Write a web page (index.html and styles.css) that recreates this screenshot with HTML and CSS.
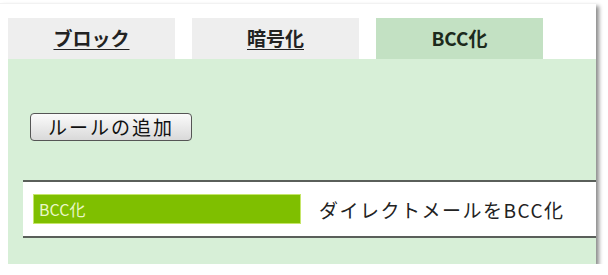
FILE: index.html
```html
<!DOCTYPE html>
<html>
<head>
  <meta charset="UTF-8">
  <title>ルール設定 - BCC化</title>
  <link rel="stylesheet" href="styles.css">
</head>

<body>
  <div class="frame">
    <ul class="tabs">
      <li class="tab"><a href="#">ブロック</a></li>
      <li class="tab"><a href="#">暗号化</a></li>
      <li class="tab active"><span>BCC化</span></li>
    </ul>

    <div class="panel">
      <button class="add-rule" type="button">ルールの追加</button>

      <div class="rule">
        <span class="rule-name">BCC化</span>
        <span class="rule-desc">ダイレクトメールをBCC化</span>
      </div>
    </div>
  </div>
</body>
</html>
```

FILE: styles.css
```css
/* page + screenshot frame */
body {
  margin: 0;
  background: #fff;
  font-family: "Noto Sans CJK JP", "Noto Sans", sans-serif;
  color: #222;
}
.frame {
  margin-top: 3px;
  width: 588px;
  height: 246px;
  padding: 14px 0 0 8px;
  background: #fff;
  border-top: 1px solid #f2f2f2;
  box-shadow: 3px 3px 4px rgba(0, 0, 0, 0.45);
}

/*********
 * tabs  *
 *********/
.tabs {
  display: flex;
  gap: 17px;
  margin: 0;
  padding: 0;
  list-style: none;
}
.tab {
  width: 167px;
  height: 41px;
  padding-bottom: 3px;
  box-sizing: border-box;
  display: flex;
  align-items: center;
  justify-content: center;
  background: #eeeeee;
  font-size: 19px;
  font-weight: bold;
}
.tab a { color: #222; text-decoration: underline; text-underline-offset: 3px; }
.tab.active { background: #c3e1c3; color: #1c2a1c; }

/*********
 * panel *
 *********/
.panel {
  background: #d7efd7;
  padding: 54px 0 26px 0;
}
.add-rule {
  display: block;
  margin-left: 22px;
  width: 162px;
  height: 28px;
  padding: 0;
  border: 1px solid #555;
  border-radius: 4px;
  background: linear-gradient(#fbfbfb, #d9d9d9);
  font-family: inherit;
  font-size: 19px;
  letter-spacing: 2px;
  line-height: 26px;
  color: #111;
}

/* rule list row */
.rule {
  margin: 39px 0 0 15px;
  padding: 12px 0;
  display: flex;
  align-items: center;
  background: #fff;
  border-top: 2px solid #5a5f5a;
  border-bottom: 2px solid #5a5f5a;
}
.rule-name {
  margin-left: 10px;
  width: 261px;
  height: 28px;
  padding-left: 5px;
  border: 1px solid #c6e66a;
  background: #7fbf00;
  color: #eaf8c8;
  font-size: 16px;
  line-height: 28px;
}
.rule-desc {
  margin-left: 18px;
  font-size: 19px;
  letter-spacing: 1.5px;
  color: #222;
}
```
